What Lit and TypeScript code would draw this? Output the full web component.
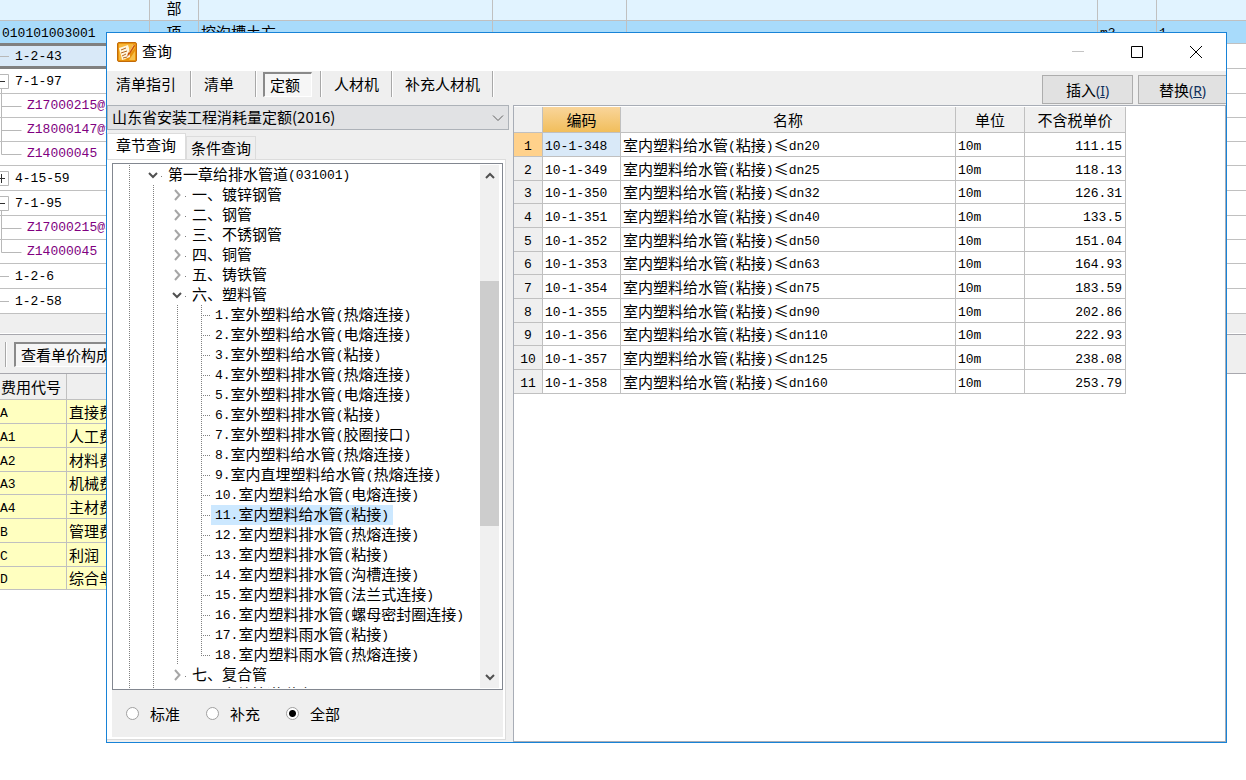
import { LitElement, html, css, svg, nothing } from "lit";
import { customElement, state } from "lit/decorators.js";
import { classMap } from "lit/directives/class-map.js";

type Kind = "leaf" | "minus" | "plus" | "child" | "last";

const billRows: { kind: Kind; code: string }[] = [
  { kind: "leaf", code: "1-2-43" },
  { kind: "minus", code: "7-1-97" },
  { kind: "child", code: "Z17000215@2" },
  { kind: "child", code: "Z18000147@1" },
  { kind: "last", code: "Z14000045" },
  { kind: "plus", code: "4-15-59" },
  { kind: "minus", code: "7-1-95" },
  { kind: "child", code: "Z17000215@3" },
  { kind: "last", code: "Z14000045" },
  { kind: "leaf", code: "1-2-6" },
  { kind: "leaf", code: "1-2-58" },
];

const fees = [
  ["A", "直接费"],
  ["A1", "人工费"],
  ["A2", "材料费"],
  ["A3", "机械费"],
  ["A4", "主材费"],
  ["B", "管理费"],
  ["C", "利润"],
  ["D", "综合单价"],
];

const sections = ["一、镀锌钢管", "二、钢管", "三、不锈钢管", "四、铜管", "五、铸铁管"];

const plastic = [
  "室外塑料给水管(热熔连接)",
  "室外塑料给水管(电熔连接)",
  "室外塑料给水管(粘接)",
  "室外塑料排水管(热熔连接)",
  "室外塑料排水管(电熔连接)",
  "室外塑料排水管(粘接)",
  "室外塑料排水管(胶圈接口)",
  "室内塑料给水管(热熔连接)",
  "室内直埋塑料给水管(热熔连接)",
  "室内塑料给水管(电熔连接)",
  "室内塑料给水管(粘接)",
  "室内塑料排水管(热熔连接)",
  "室内塑料排水管(粘接)",
  "室内塑料排水管(沟槽连接)",
  "室内塑料排水管(法兰式连接)",
  "室内塑料排水管(螺母密封圈连接)",
  "室内塑料雨水管(粘接)",
  "室内塑料雨水管(热熔连接)",
];

const sizes = [20, 25, 32, 40, 50, 63, 75, 90, 110, 125, 160];
const prices = ["111.15", "118.13", "126.31", "133.5", "151.04", "164.93", "183.59", "202.86", "222.93", "238.08", "253.79"];
const quotas = sizes.map((size, i) => ({
  code: `10-1-${348 + i}`,
  name: `室内塑料给水管(粘接)≤dn${size}`,
  unit: "10m",
  price: prices[i],
}));

/* Latin runs are set in the monospaced face, the rest stays in the CJK one. */
const mixed = (text: string) =>
  text.split(/([\x21-\x7e]+)/).map((part, i) => (i % 2 ? html`<span class="mono">${part}</span>` : part));

const chevron = (dir: "down" | "right" | "up") => {
  const d = { down: "M2 4l4 4 4-4", right: "M4 1l4.500 5-4.500 5", up: "M2 8l4-4 4 4" }[dir];
  return html`<svg class="chev ${dir}" viewBox="0 0 12 12" width="12" height="12">${svg`<path d=${d}></path>`}</svg>`;
};

@customElement("app-root")
export class AppRoot extends LitElement {
  @state() private tab = "定额";
  @state() private leaf = 11;
  @state() private row = 0;

  static styles = css`
    :host {
      display: block;
      position: relative;
      height: 100vh;
      overflow: hidden;
      background: #fff;
      color: #000;
      font: 15px/20px "Noto Sans CJK SC", sans-serif;
    }
    * { box-sizing: border-box; }
    .mono { font-family: "Liberation Mono", monospace; font-size: 13px; line-height: 1; vertical-align: 1px; }
    button, select { font: inherit; color: inherit; margin: 0; padding: 0; border-radius: 0; cursor: default; }
    button { border: 0; background: none; white-space: nowrap; }
    table { border-collapse: separate; border-spacing: 0; table-layout: fixed; }
    th, td { padding: 0; font-weight: 400; white-space: nowrap; overflow: hidden; line-height: 20px; border: 0 solid #c0c0c0; border-width: 0 1px 1px 0; }

    /* bill sheet */
    .bill { width: 100%; }
    .bill td { height: 25px; }
    .bill td:last-child { border-right: 0; }
    .bill .part td { height: 21px; line-height: 16px; vertical-align: top; background: #e1f3ff; }
    .bill .item td { height: 23px; background: #a8dbfb; padding-left: 2px; }
    .bill .centred, .bill .item .centred { text-align: center; padding: 0; }
    .bill .item .first { border-bottom-color: #808080; }
    .bill .current .first { background: #d9e9f8; border: 0 solid #808080; border-width: 2px 0 3px; }
    .bill .sub td { height: 24px; color: #800080; }
    .bill .plain { border-right: 0; }
    .node { display: flex; align-items: center; height: 20px; }
    .node svg { flex: none; display: block; overflow: visible; stroke: #b8b8b8; fill: none; }
    .band { height: 20px; background: #efefef; border-bottom: 1px solid #fff; }
    .bar { display: flex; align-items: center; gap: 7px; height: 40px; padding-left: 5px; background: #efefef; border: 1px solid #a8a8ae; border-width: 1px 0; }
    .rule { width: 2px; height: 25px; background: #a8a8a8; border-right: 1px solid #fff; }
    .pressed { border: 1px solid #fff; border-top: 2px solid #8a8a8a; border-left: 2px solid #8a8a8a; background: #f6f6f6; height: 25px; padding: 0 5px; line-height: 20px; }
    .fees { width: 320px; }
    .fees th { height: 26px; background: #efefef; text-align: left; padding-left: 1px; }
    .fees td { height: 24px; background: #ffffc0; }
    .fees tr:nth-child(4n) td { height: 23px; }
    .fees td + td { padding-left: 2px; }

    /* dialog */
    .dialog {
      position: absolute;
      inset: 32px 19px 37px 106px;
      display: flex;
      flex-direction: column;
      overflow: hidden;
      border: 1px solid #1883d7;
      background: #efefef;
    }
    .title { display: flex; align-items: center; height: 38px; padding: 0 1px 0 10px; background: #fff; flex: none; }
    .title h1 { flex: 1; margin: 0 0 0 5px; font-size: 15px; font-weight: 400; line-height: 20px; padding-bottom: 2px; }
    .win { width: 59px; height: 38px; display: grid; place-items: center; }
    .win svg { display: block; fill: none; stroke: #000; }
    .win .dim { stroke: #c4c4c4; }
    .tools { display: flex; height: 34px; flex: none; justify-content: space-between; }
    .kinds { display: flex; height: 26px; }
    .kind { display: flex; align-items: center; min-width: 65px; border-right: 1px solid #fff; box-shadow: inset -1px 0 #a8a8a8; }
    .kind button { padding: 0 13px 0 12px; }
    .kind:first-child button { padding: 0 15px 0 9px; }
    .kind .pressed { margin-left: 6px; padding: 0 11px 0 5px; }
    .acts { display: flex; gap: 5px; padding-top: 4px; }
    .acts button { width: 91px; height: 29px; border: 1px solid #adadad; background: #e1e1e1; }
    .acts button:last-child { width: 88px; border-right: 0; }
    .acts span { font: 14px/1 "Noto Sans", sans-serif; color: #10305c; }
    .main { flex: 1; min-height: 0; display: grid; grid-template-columns: 402px minmax(0, 1fr); gap: 4px; }
    .side { display: flex; flex-direction: column; min-height: 0; padding-bottom: 2px; }
    .combo { display: grid; align-items: center; height: 25px; margin-bottom: 3px; flex: none; }
    .combo > * { grid-area: 1 / 1; }
    .combo select { width: 100%; height: 25px; padding: 0 20px 2px 4px; appearance: none; border: 1px solid #adb2b8; background: #e1e2e4; }
    .combo svg { justify-self: end; margin-right: 5px; fill: none; stroke: #606060; pointer-events: none; }
    .tabs { display: flex; align-items: flex-end; height: 26px; flex: none; }
    .tabs button { height: 23px; line-height: 20px; padding: 0 4px; background: #efefef; border: 1px solid #dcdcdc; border-bottom: 0; }
    .tabs .on { height: 26px; padding: 0 9px 3px 8px; background: #fff; }
    .sheet { flex: 1; min-height: 0; display: flex; flex-direction: column; margin-right: 3px; padding: 3px 2px 2px 5px; background: #fff; border: 1px solid #dcdcdc; border-left: 0; }
    .tree { flex: 1; min-height: 0; display: flex; border: 1px solid #828790; background: #fff; overflow: hidden; padding: 1px 3px 1px 0; }
    .rows { flex: 1; margin: 0; padding: 0 0 0 4px; list-style: none; overflow: hidden; min-width: 0; }
    .rows li { display: flex; height: 20px; white-space: nowrap; }
    .g { flex: none; width: 24px; height: 20px; background: repeating-linear-gradient(#808080 0 1px, transparent 1px 2px) 12px 0 / 1px 100% no-repeat; }
    .twist { flex: none; width: 24px; display: flex; align-items: center; justify-content: center; }
    .twist::after { content: ""; width: 1px; height: 1px; margin: 2px -3px 0 2px; background: #808080; }
    .branch { flex: none; width: 22px; height: 20px; background:
      repeating-linear-gradient(#808080 0 1px, transparent 1px 2px) 12px 0 / 1px 100% no-repeat,
      repeating-linear-gradient(90deg, #808080 0 1px, transparent 1px 2px) 12px 10px / 10px 1px no-repeat; }
    .branch.end { background-size: 1px 11px, 10px 1px; }
    .label { height: 20px; padding: 0 4px; line-height: 18px; }
    .twist + .label { padding-left: 3px; }
    .label.sel { background: #cce8ff; }
    .chev { display: block; fill: none; stroke: #505050; stroke-width: 2; }
    .chev.right { stroke: #a6a6a6; }
    .scroll { width: 19px; flex: none; display: flex; flex-direction: column; align-items: center; background: #f0f0f0; }
    .scroll button { height: 22px; }
    .before { flex: 94; }
    .thumb { flex: 245; width: 100%; background: #cdcdcd; }
    .after { flex: 140; }
    .filters { display: flex; gap: 26px; align-items: center; height: 47px; flex: none; padding-left: 14px; background: #efefef; }
    .filters label { display: flex; align-items: center; gap: 11px; }
    .filters input { appearance: none; width: 13px; height: 13px; margin: 0; border: 1px solid #a0a0a0; border-radius: 50%; background: #fff; }
    .filters input:checked { background: radial-gradient(circle, #000 3px, #fff 4px); }

    .list { border: 1px solid #a8adb6; background: #fff; padding-top: 1px; overflow: hidden; }
    .quota th { height: 26px; background: #efefef; text-align: center; }
    .quota td { padding-left: 2px; }
    .quota tbody th, .quota tbody td { height: 24px; }
    .quota tbody tr:nth-child(3n) > * { height: 23px; }
    .quota thead .hot { background: linear-gradient(#f9d59a, #f1be5c); }
    .quota .now th { background: #ffd18b; }
    .quota .now .code { background: #d9e9f8; }
    .quota .price { text-align: right; padding-right: 3px; }
  `;

  private marker(kind: Kind) {
    const sub = kind === "child" || kind === "last";
    const box = kind === "minus" || kind === "plus";
    return html`<svg width=${sub ? 27 : 15} height="20" viewBox="0 0 ${sub ? 27 : 15} 20">
      ${kind === "leaf" ? svg`<path d="M0 10.500h9"></path>` : nothing}
      ${kind === "child" ? svg`<path d="M1.500-2v24M1.500 10.500h20"></path>` : nothing}
      ${kind === "last" ? svg`<path d="M1.500-2v12.500h20"></path>` : nothing}
      ${box ? svg`<path fill="#fff" d="M-1 3.500h9.500v14h-9.500"></path><path stroke="#303030" d=${kind === "plus" ? "M0 10.500h5M1.500 6v9" : "M0 10.500h5"}></path>` : nothing}
      ${kind === "minus" ? svg`<path d="M1.500 18v5"></path>` : nothing}
    </svg>`;
  }

  private get backdrop() {
    return html`
      <table class="bill">
        <colgroup>
          <col style="width:150px" /><col style="width:49px" /><col style="width:294px" /><col style="width:134px" />
          <col style="width:471px" /><col style="width:59px" /><col />
        </colgroup>
        <tbody>
          <tr class="part"><td></td><td class="centred">部</td><td></td><td></td><td></td><td></td><td></td></tr>
          <tr class="item">
            <td class="first">${mixed("010101003001")}</td><td class="centred">项</td><td>挖沟槽土方</td><td></td><td></td>
            <td>${mixed("m3")}</td><td>${mixed("1")}</td>
          </tr>
          ${billRows.map(
            (r, i) => html`<tr class=${classMap({ current: i === 0, sub: r.kind === "child" || r.kind === "last" })}>
              <td class="first"><div class="node">${this.marker(r.kind)}<span class="mono">${r.code}</span></div></td>
              <td class="plain" colspan="6"></td>
            </tr>`,
          )}
        </tbody>
      </table>
      <div class="band"></div>
      <div class="bar"><span class="rule"></span><button class="pressed">查看单价构成</button></div>
      <table class="fees">
        <colgroup><col style="width:67px" /><col /></colgroup>
        <thead><tr><th>费用代号</th><th></th></tr></thead>
        <tbody>${fees.map(([c, n]) => html`<tr><td>${mixed(c)}</td><td>${n}</td></tr>`)}</tbody>
      </table>
    `;
  }

  private section(text: string, open = false) {
    return html`<li><i class="g"></i><i class="g"></i><span class="twist">${chevron(open ? "down" : "right")}</span><span class="label">${text}</span></li>`;
  }

  private get tree() {
    return html`<ul class="rows">
      <li><i class="g"></i><span class="twist">${chevron("down")}</span><span class="label">${mixed("第一章给排水管道(031001)")}</span></li>
      ${sections.map((s) => this.section(s))}
      ${this.section("六、塑料管", true)}
      ${plastic.map(
        (name, i) => html`<li @click=${() => (this.leaf = i + 1)}>
          <i class="g"></i><i class="g"></i><i class="g"></i>
          <i class=${classMap({ branch: true, end: i === plastic.length - 1 })}></i>
          <span class=${classMap({ label: true, sel: this.leaf === i + 1 })}>${mixed(`${i + 1}.${name}`)}</span>
        </li>`,
      )}
      ${this.section("七、复合管")}
      ${this.section("八、室外管道碰头")}
    </ul>`;
  }

  private get appIcon() {
    return html`<svg width="20" height="20" viewBox="0 0 20 20" aria-hidden="true">
      <rect x=".5" y=".5" width="19" height="19" rx="1.500" fill="#e8920c" stroke="#c26a08"></rect>
      <path d="M2 2h16v4L8 18H2z" fill="#f8b73a"></path>
      <path d="M12 18l6-9v9z" fill="#f6c04c"></path>
      <path d="M2 6l9-3 1 3 1 9-8 3-1-5-1-3z" fill="#fff6df"></path>
      <path d="M4 8l5-2M4 11l6-2M5 14l4-2M6 16l4-1" stroke="#b5651d" stroke-width="1"></path>
      <path d="M17 2l-6 9-1 4 3-3 5-8z" fill="#c9540c"></path>
      <path d="M16.500 3l-5 8" stroke="#ffd98a" stroke-width=".8"></path>
    </svg>`;
  }

  render() {
    return html`
      ${this.backdrop}
      <section class="dialog" role="dialog" aria-label="查询">
        <header class="title">
          ${this.appIcon}
          <h1>查询</h1>
          <button class="win" aria-label="最小化"><svg width="12" height="12"><path class="dim" d="M0 5.500h12"></path></svg></button>
          <button class="win" aria-label="最大化"><svg width="12" height="12"><path d="M.5.5h11v11H.5z"></path></svg></button>
          <button class="win" aria-label="关闭"><svg width="12" height="12"><path d="M0 0l12 12M12 0L0 12"></path></svg></button>
        </header>
        <div class="tools">
          <div class="kinds">
            ${["清单指引", "清单", "定额", "人材机", "补充人材机"].map(
              (k) => html`<div class="kind">
                <button class=${k === this.tab ? "pressed" : ""} @click=${() => (this.tab = k)}>${k}</button>
              </div>`,
            )}
          </div>
          <div class="acts">
            <button>插入<span>(<u>I</u>)</span></button>
            <button>替换<span>(<u>R</u>)</span></button>
          </div>
        </div>
        <div class="main">
          <div class="side">
            <div class="combo">
              <select aria-label="定额库"><option>山东省安装工程消耗量定额(2016)</option></select>
              <svg width="12" height="12"><path d="M1 3.500l5 5 5-5"></path></svg>
            </div>
            <div class="tabs"><button class="on">章节查询</button><button>条件查询</button></div>
            <div class="sheet">
              <div class="tree">
                ${this.tree}
                <div class="scroll">
                  <button aria-label="向上">${chevron("up")}</button>
                  <div class="before"></div><div class="thumb"></div><div class="after"></div>
                  <button aria-label="向下">${chevron("down")}</button>
                </div>
              </div>
              <div class="filters" role="radiogroup" aria-label="范围">
                <label><input type="radio" name="scope" />标准</label>
                <label><input type="radio" name="scope" />补充</label>
                <label><input type="radio" name="scope" checked />全部</label>
              </div>
            </div>
          </div>
          <div class="list">
            <table class="quota">
              <colgroup>
                <col style="width:29px" /><col style="width:78px" /><col style="width:335px" /><col style="width:69px" /><col style="width:101px" />
              </colgroup>
              <thead><tr><th></th><th class="hot">编码</th><th>名称</th><th>单位</th><th>不含税单价</th></tr></thead>
              <tbody>
                ${quotas.map(
                  (q, i) => html`<tr class=${classMap({ now: i === this.row })} @click=${() => (this.row = i)}>
                    <th>${mixed(String(i + 1))}</th>
                    <td class="code">${mixed(q.code)}</td>
                    <td>${mixed(q.name)}</td>
                    <td>${mixed(q.unit)}</td>
                    <td class="price">${mixed(q.price)}</td>
                  </tr>`,
                )}
              </tbody>
            </table>
          </div>
        </div>
      </section>
    `;
  }
}
